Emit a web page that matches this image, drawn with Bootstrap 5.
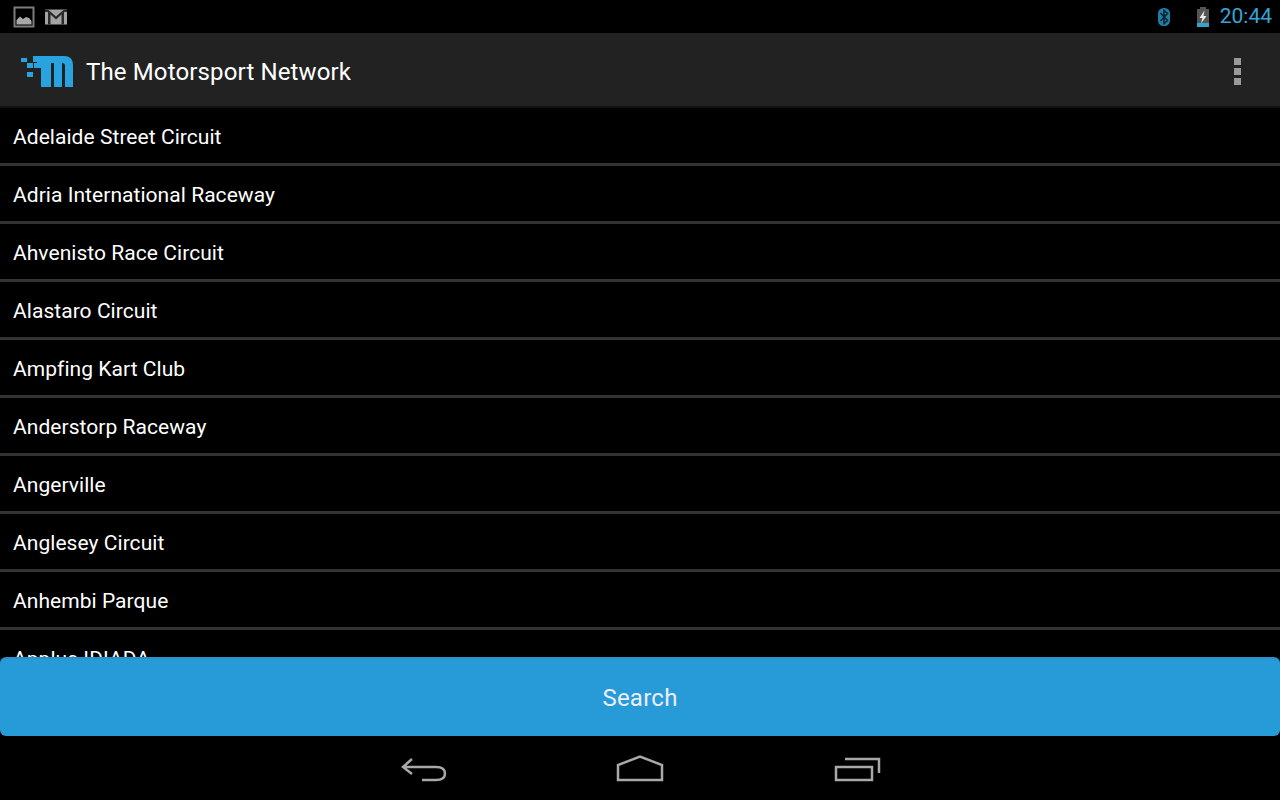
<!DOCTYPE html>
<html lang="en">
<head>
  <meta charset="UTF-8" />
  <meta name="viewport" content="width=device-width, initial-scale=1" />
  <title>The Motorsport Network</title>
  <link href="https://cdn.jsdelivr.net/npm/bootstrap@5.3.3/dist/css/bootstrap.min.css" rel="stylesheet" />
  <style>
    html, body { height: 100%; }
    body {
      background-color: #000;
      color: #fff;
      font-family: Roboto, sans-serif;
      overflow: hidden;
    }
    .app-screen { height: 800px; }
    .status-strip { height: 33px; padding: 0 8px 0 13px; }
    .status-time { font-size: 21px; line-height: 33px; color: #33a5d8; margin-left: 9px; }
    .action-strip {
      height: 75px;
      background-color: #222;
      border-bottom: 2px solid #111;
      padding: 4px 21px 0;
    }
    .app-title { font-size: 24px; line-height: 1; margin-left: 13px; letter-spacing: .14px; }
    .more-dots { display: grid; gap: 3px; margin-right: 18px; }
    .more-dots span { width: 7px; height: 7px; background-color: #9a9a9a; display: block; }
    .circuit-list { overflow: hidden; min-height: 0; }
    .circuit-row {
      height: 58px;
      flex-shrink: 0;
      padding-left: 13px;
      font-size: 21px;
      letter-spacing: .05px;
      line-height: 58px;
      border-bottom: 3px solid #333;
    }
    .search-btn {
      height: 79px;
      flex-shrink: 0;
      background-color: #279ad8;
      border: 0;
      border-top: 2px solid #2f8fc4;
      border-radius: 6px;
      color: #eef;
      font-size: 24px;
      letter-spacing: .25px;
    }
    .nav-strip { height: 64px; flex-shrink: 0; }
  </style>
</head>
<body>
  <div class="app-screen d-flex flex-column">
    <div class="status-strip d-flex align-items-center flex-shrink-0">
      <svg width="22" height="22" viewBox="0 0 22 22">
        <rect x="1.500" y="1.500" width="19" height="19" fill="none" stroke="#7c7c7c" stroke-width="2"/>
        <path d="M3.500 18.500V14L7 10.500L10 13L13 11L16 12L18.500 15V18.500Z" fill="#a8a8a8"/>
      </svg>
      <svg class="ms-2" width="25" height="18" viewBox="0 0 25 18">
        <rect x="2" y="1.500" width="22" height="15" fill="#a4a4a4"/>
        <path d="M2 1.500H5L13 8.500L21 1.500H24V4L21 4V16.500H18.500V6.500L13 11.500L7.500 6.500V16.500H5V4H2Z" fill="#2b2b2b"/>
      </svg>
      <svg class="ms-auto" width="14" height="20" viewBox="0 0 14 20">
        <rect x="1" y="1" width="12" height="18" rx="5.500" fill="#1f7fa8"/>
        <path d="M3.500 6L10.500 13.500L7 16.500V3.500L10.500 6.500L3.500 14" fill="none" stroke="#0a2430" stroke-width="1.500"/>
      </svg>
      <svg class="ms-4" width="16" height="22" viewBox="0 0 16 22">
        <rect x="5" y="1" width="6" height="2" fill="#555"/>
        <rect x="2" y="3" width="12" height="18" fill="#555"/>
        <rect x="2" y="17" width="12" height="4" fill="#33a5c8"/>
        <path d="M9.500 4.500L4.500 12H7.500L6 17.500L11.500 10H8.500Z" fill="#eee"/>
      </svg>
      <span class="status-time">20:44</span>
    </div>

    <div class="action-strip d-flex align-items-center flex-shrink-0">
      <svg width="52" height="33" viewBox="0 0 52 33">
        <rect x="0" y="3" width="6" height="4" fill="#29a3e0"/>
        <rect x="6" y="8" width="6" height="5" fill="#29a3e0"/>
        <rect x="6" y="17" width="6" height="5" fill="#29a3e0"/>
        <path d="M12 1H43Q52 1 52 10V32H44V11Q44 8 41 8H41V32H33V8H30V32H20V13H13V8H16V7H12Z" fill="#29a3e0"/>
      </svg>
      <span class="app-title">The Motorsport Network</span>
      <div class="more-dots ms-auto"><span></span><span></span><span></span></div>
    </div>

    <div class="circuit-list flex-grow-1 d-flex flex-column" id="circuits"></div>

    <button class="search-btn w-100" type="button">Search</button>

    <div class="nav-strip d-flex justify-content-center align-items-center">
      <svg width="500" height="60" viewBox="0 0 500 60">
        <g fill="none" stroke="#a8a8a8" stroke-width="2.500">
          <path d="M22 21L13 29L22 36M13 29H46Q55 29 55 35.500Q55 42 46 42H32"/>
          <path d="M228 42V27L250 18.500L272 27V42Z"/>
          <path d="M446 29H482V42H446ZM455 21H489V35"/>
        </g>
      </svg>
    </div>
  </div>

  <script>
    const circuits = [
      "Adelaide Street Circuit", "Adria International Raceway", "Ahvenisto Race Circuit",
      "Alastaro Circuit", "Ampfing Kart Club", "Anderstorp Raceway", "Angerville",
      "Anglesey Circuit", "Anhembi Parque", "Applus IDIADA"
    ];
    const list = document.getElementById("circuits");
    circuits.forEach(function (name) {
      const row = document.createElement("div");
      row.className = "circuit-row";
      row.textContent = name;
      list.appendChild(row);
    });
  </script>
  <script src="https://cdn.jsdelivr.net/npm/bootstrap@5.3.3/dist/js/bootstrap.bundle.min.js"></script>
</body>
</html>
